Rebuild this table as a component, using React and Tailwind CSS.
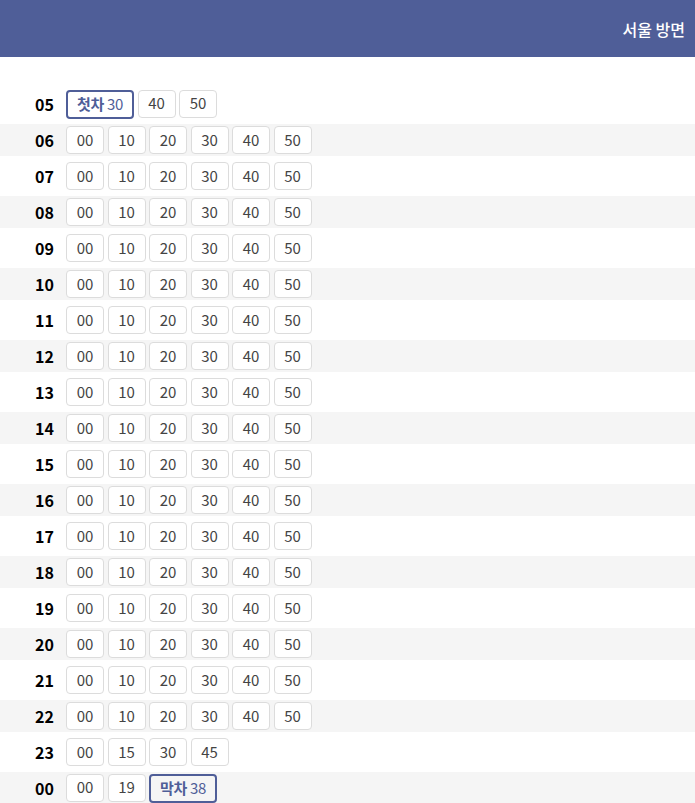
import React from "react";

const rows = [
  { hour: "05", mins: [{ first: "첫차", m: "30" }, "40", "50"] },
  ...["06", "07", "08", "09", "10", "11", "12", "13", "14", "15", "16", "17", "18", "19", "20", "21", "22"].map(
    (h) => ({ hour: h, mins: ["00", "10", "20", "30", "40", "50"] })
  ),
  { hour: "23", mins: ["00", "15", "30", "45"] },
  { hour: "00", mins: ["00", "19", { first: "막차", m: "38" }] },
];

function MinuteChip({ item }) {
  if (typeof item === "object") {
    return (
      <span className="flex h-[29px] items-center gap-[3px] rounded-[4px] border-2 border-[#4f5e98] px-[9px] text-[15px] tracking-[-0.3px] text-[#4f5e98]">
        <b className="font-bold">{item.first}</b>
        <span>{item.m}</span>
      </span>
    );
  }
  return (
    <span className="flex h-[28px] w-[38px] items-center justify-center rounded-[4px] border border-[#dcdcdc] bg-white text-[15px] text-[#444]">
      {item}
    </span>
  );
}

export default function App() {
  return (
    <div
      className="min-h-[803px] bg-white"
      style={{ fontFamily: '"Noto Sans CJK KR", "Noto Sans", sans-serif' }}
    >
      <header className="flex h-[57px] items-center justify-end bg-[#4f5e98] pr-[10px]">
        <h1 className="text-[16px] font-medium text-white">서울 방면</h1>
      </header>

      <ul className="mt-[31px] flex flex-col gap-[4px]">
        {rows.map((row, index) => (
          <li
            key={row.hour}
            className={`flex h-[32px] items-center ${index % 2 === 1 ? "bg-[#f5f5f5]" : "bg-white"}`}
          >
            <span className="w-[55px] pr-[1px] text-right text-[16px] font-bold text-black">
              {row.hour}
            </span>
            <div className="ml-[11px] flex gap-[3.5px]">
              {row.mins.map((m, i) => (
                <MinuteChip key={i} item={m} />
              ))}
            </div>
          </li>
        ))}
      </ul>
    </div>
  );
}
